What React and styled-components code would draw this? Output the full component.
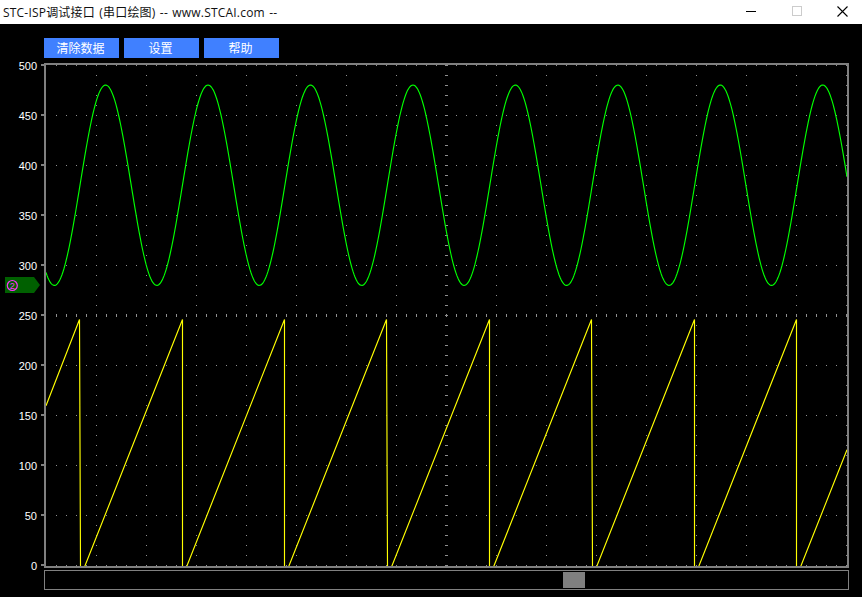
import React from "react";
import styled, { createGlobalStyle } from "styled-components";

const GlobalStyle = createGlobalStyle`
  html, body {
    margin: 0;
    padding: 0;
    background: #000;
  }
`;

const Window = styled.div`
  display: flex;
  flex-direction: column;
  width: 862px;
  height: 597px;
  overflow: hidden;
  background: #000;
`;

const TitleBar = styled.div`
  display: flex;
  align-items: center;
  justify-content: space-between;
  height: 24px;
  flex: none;
  background: #fff;
`;

const Title = styled.span`
  padding-left: 3px;
  font: 12px "Open Sans", "Noto Sans CJK SC", sans-serif;
  letter-spacing: 0.2px;
  word-spacing: 1px;
  color: #111;
  white-space: nowrap;
`;

const WindowControls = styled.div`
  display: flex;
  height: 100%;
  padding-right: 1px;
`;

const ControlButton = styled.div`
  display: flex;
  align-items: center;
  justify-content: center;
  box-sizing: border-box;
  width: 45.5px;
  height: 100%;
  padding: 0 0 2px 8px;
`;

const Toolbar = styled.div`
  display: flex;
  gap: 5px;
  padding: 14px 0 0 44px;
  height: 20px;
  flex: none;
`;

const ToolButton = styled.button`
  width: 75px;
  height: 20px;
  padding: 0 2px 2px 0;
  border: none;
  background: #4080ff;
  color: #fff;
  font: 12px "Noto Sans CJK SC", sans-serif;
`;

const Chart = styled.svg`
  display: block;
  flex: none;
`;

const SliderTrack = styled.div`
  position: relative;
  box-sizing: border-box;
  width: 805px;
  height: 20px;
  margin: -4px 0 0 44px;
  border: 1px solid #808080;
  flex: none;
`;

const SliderThumb = styled.div`
  position: absolute;
  left: ${(p) => p.$left}px;
  top: 1px;
  width: 22px;
  height: 16px;
  background: #808080;
`;

// plot coordinates: y=0 is the top edge of the plot frame (page y=63)
const BASE_Y = 503;
const yOf = (v) => BASE_Y - v * 1.002;
const PERIOD = 102.45;
const SAW_TOP = yOf(246);

const range = (from, to, step) => {
  const out = [];
  for (let i = from; i <= to; i += step) out.push(i);
  return out;
};

const sinePoints = () =>
  range(46, 847, 1)
    .map((x) => {
      const v = 380 + 100 * Math.cos((2 * Math.PI * (x - 105.6)) / PERIOD);
      return `${x},${yOf(v).toFixed(1)}`;
    })
    .join(" ");

// [x at the top, x at the bottom] of each falling edge
const RESETS = [
  [79.5, 80.5],
  [182.5, 182.5],
  [284.5, 284.5],
  [386.5, 387.5],
  [489.5, 489.5],
  [591.5, 592.5],
  [694.5, 694.5],
  [796.5, 796.5],
];

const sawPoints = () => {
  const pts = [`46,${yOf(160).toFixed(1)}`];
  RESETS.forEach(([top, bottom]) => {
    pts.push(`${top},${SAW_TOP.toFixed(1)}`);
    pts.push(`${bottom},${BASE_Y + 1}`);
    pts.push(`${bottom + 4},${BASE_Y + 1}`);
  });
  pts.push(`847,${yOf(116).toFixed(1)}`);
  return pts.join(" ");
};

const GRID_X = range(96, 846, 50);
const GRID_Y = range(2, 502, 50);
const LABELS = [500, 450, 400, 350, 300, 250, 200, 150, 100, 50, 0];

const Grid = () => (
  <g fill="#909090" shapeRendering="crispEdges">
    {GRID_Y.map((y) =>
      range(56, 846, 10).map((x) => <rect key={`h${y}-${x}`} x={x} y={y} width="1" height="1" />)
    )}
    {GRID_X.map((x) =>
      range(12, 492, 10).map((y) => <rect key={`v${x}-${y}`} x={x} y={y} width="1" height="1" />)
    )}
    {range(2, 502, 10).map((y) => (
      <rect key={`cy${y}`} x="445" y={y} width="3" height="1" />
    ))}
    {range(56, 846, 10).map((x) => (
      <rect key={`cx${x}`} x={x} y="251" width="1" height="3" />
    ))}
  </g>
);

const Axes = () => (
  <g fill="#808080" shapeRendering="crispEdges">
    <rect x="44" y="0" width="805" height="2" />
    <rect x="44" y="503" width="805" height="2" />
    <rect x="44" y="0" width="2" height="505" />
    <rect x="847" y="0" width="2" height="505" />
    {LABELS.map((v, i) => (
      <rect key={v} x="41" y={i * 50 + 1} width="3" height="2" />
    ))}
  </g>
);

const AxisLabels = () => (
  <g fill="#fff" fontFamily="'Liberation Sans', sans-serif" fontSize="11" textAnchor="end">
    {LABELS.map((v, i) => (
      <text key={v} x="37" y={i * 50 + 7}>
        {v}
      </text>
    ))}
  </g>
);

const ChannelMarker = () => (
  <g>
    <polygon points="5,214 34,214 40,222 34,230 5,230" fill="#006000" />
    <circle cx="12.3" cy="222.5" r="5" fill="none" stroke="#ff30ff" strokeWidth="1.2" />
    <text x="12.3" y="225.7" fill="#ff30ff" fontFamily="'Liberation Sans', sans-serif" fontSize="9" textAnchor="middle">
      2
    </text>
  </g>
);

const App = () => (
  <Window>
    <GlobalStyle />
    <TitleBar>
      <Title>STC-ISP调试接口 (串口绘图) -- www.STCAI.com --</Title>
      <WindowControls>
        <ControlButton>
          <svg width="10" height="10" viewBox="0 0 10 10" shapeRendering="crispEdges">
            <rect x="0" y="5" width="10" height="1" fill="#000" />
          </svg>
        </ControlButton>
        <ControlButton>
          <svg width="10" height="10" viewBox="0 0 10 10" shapeRendering="crispEdges">
            <rect x="0.5" y="0.5" width="9" height="9" fill="none" stroke="#ccc" />
          </svg>
        </ControlButton>
        <ControlButton>
          <svg width="11" height="11" viewBox="0 0 11 11">
            <path d="M0.5 0.5L10.5 10.5M10.5 0.5L0.5 10.5" stroke="#000" strokeWidth="1.1" />
          </svg>
        </ControlButton>
      </WindowControls>
    </TitleBar>
    <Toolbar>
      <ToolButton>清除数据</ToolButton>
      <ToolButton>设置</ToolButton>
      <ToolButton>帮助</ToolButton>
    </Toolbar>
    <Chart width="862" height="516" viewBox="0 0 862 516">
      <g transform="translate(0 5)">
        <Grid />
        <polyline points={sinePoints()} fill="none" stroke="#00ff00" strokeWidth="1.15" />
        <polyline points={sawPoints()} fill="none" stroke="#ffff00" strokeWidth="1.15" strokeLinejoin="bevel" />
        <Axes />
        <AxisLabels />
        <ChannelMarker />
      </g>
    </Chart>
    <SliderTrack>
      <SliderThumb $left={518} />
    </SliderTrack>
  </Window>
);

export default App;
